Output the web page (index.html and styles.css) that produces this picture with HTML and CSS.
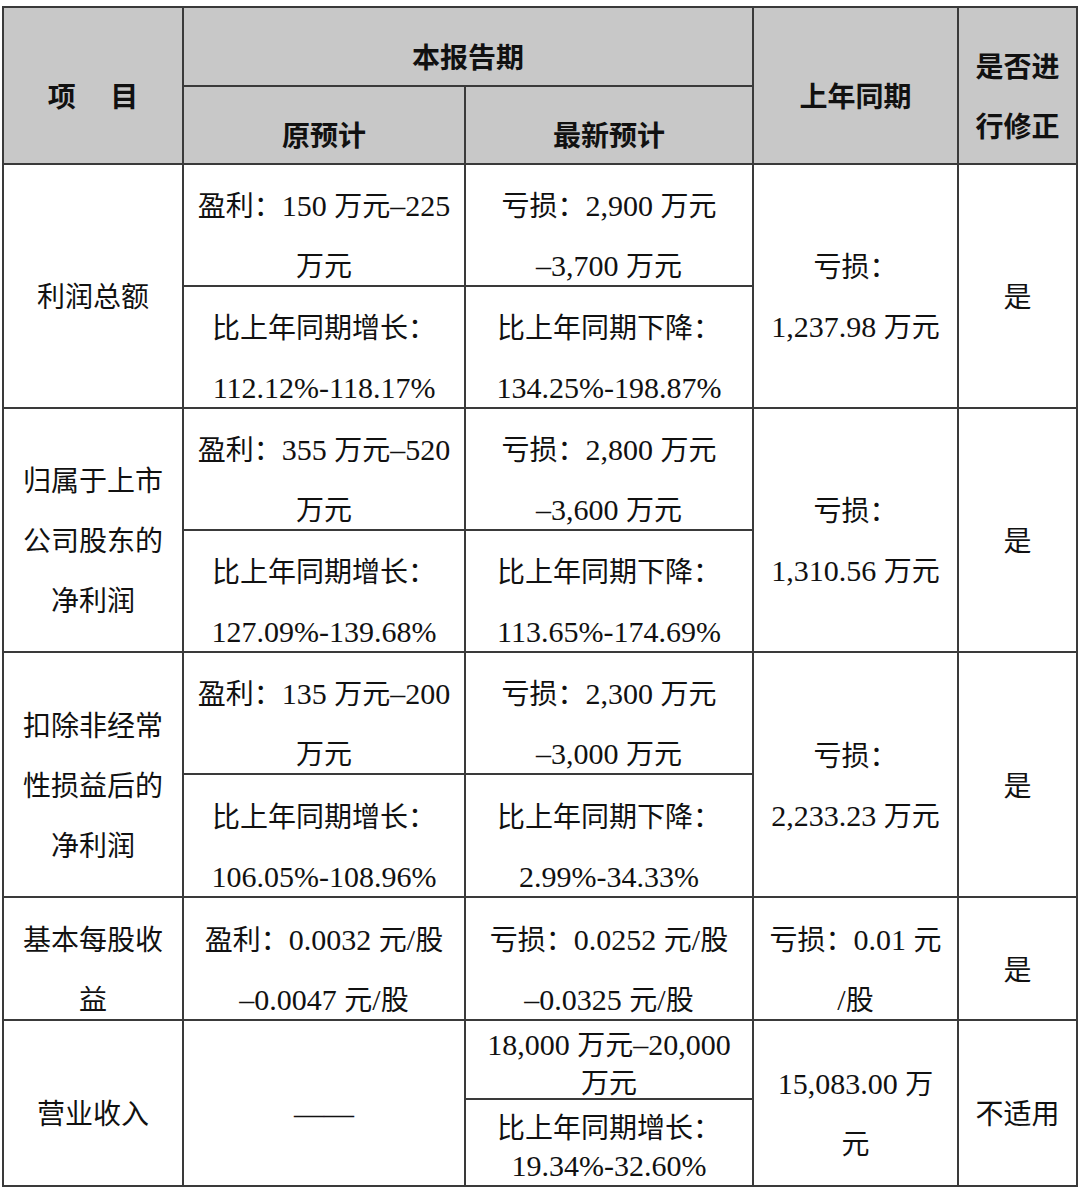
FILE: index.html
```html
<!DOCTYPE html>
<html lang="zh-CN">
<head>
<meta charset="utf-8">
<link rel="stylesheet" href="styles.css">
</head>
<body>
<table class="sheet">
  <colgroup>
    <col class="c1"><col class="c2"><col class="c3"><col class="c4"><col class="c5">
  </colgroup>
  <tr class="h1">
    <th rowspan="2"><div class="t">项　 目</div></th>
    <th colspan="2"><div class="t">本报告期</div></th>
    <th rowspan="2"><div class="t">上年同期</div></th>
    <th rowspan="2"><div class="t">是否进<br>行修正</div></th>
  </tr>
  <tr class="h2">
    <th><div class="t">原预计</div></th>
    <th><div class="t">最新预计</div></th>
  </tr>

  <tr class="r">
    <td rowspan="2"><div class="t">利润总额</div></td>
    <td><div class="t">盈利：<span class="n">150 </span>万元<span class="n">–225</span><br>万元</div></td>
    <td><div class="t">亏损：<span class="n">2,900 </span>万元<br><span class="n">–3,700 </span>万元</div></td>
    <td rowspan="2"><div class="t">亏损：<br><span class="n">1,237.98 </span>万元</div></td>
    <td rowspan="2"><div class="t">是</div></td>
  </tr>
  <tr class="r">
    <td><div class="t">比上年同期增长：<br><span class="n">112.12%-118.17%</span></div></td>
    <td><div class="t">比上年同期下降：<br><span class="n">134.25%-198.87%</span></div></td>
  </tr>

  <tr class="r">
    <td rowspan="2"><div class="t">归属于上市<br>公司股东的<br>净利润</div></td>
    <td><div class="t">盈利：<span class="n">355 </span>万元<span class="n">–520</span><br>万元</div></td>
    <td><div class="t">亏损：<span class="n">2,800 </span>万元<br><span class="n">–3,600 </span>万元</div></td>
    <td rowspan="2"><div class="t">亏损：<br><span class="n">1,310.56 </span>万元</div></td>
    <td rowspan="2"><div class="t">是</div></td>
  </tr>
  <tr class="r">
    <td><div class="t">比上年同期增长：<br><span class="n">127.09%-139.68%</span></div></td>
    <td><div class="t">比上年同期下降：<br><span class="n">113.65%-174.69%</span></div></td>
  </tr>

  <tr class="r">
    <td rowspan="2"><div class="t">扣除非经常<br>性损益后的<br>净利润</div></td>
    <td><div class="t">盈利：<span class="n">135 </span>万元<span class="n">–200</span><br>万元</div></td>
    <td><div class="t">亏损：<span class="n">2,300 </span>万元<br><span class="n">–3,000 </span>万元</div></td>
    <td rowspan="2"><div class="t">亏损：<br><span class="n">2,233.23 </span>万元</div></td>
    <td rowspan="2"><div class="t">是</div></td>
  </tr>
  <tr class="r r3b">
    <td><div class="t">比上年同期增长：<br><span class="n">106.05%-108.96%</span></div></td>
    <td><div class="t">比上年同期下降：<br><span class="n">2.99%-34.33%</span></div></td>
  </tr>

  <tr class="r r4">
    <td><div class="t">基本每股收<br>益</div></td>
    <td><div class="t">盈利：<span class="n">0.0032 </span>元<span class="n">/</span>股<br><span class="n">–0.0047 </span>元<span class="n">/</span>股</div></td>
    <td><div class="t">亏损：<span class="n">0.0252 </span>元<span class="n">/</span>股<br><span class="n">–0.0325 </span>元<span class="n">/</span>股</div></td>
    <td><div class="t">亏损：<span class="n">0.01 </span>元<br><span class="n">/</span>股</div></td>
    <td><div class="t">是</div></td>
  </tr>

  <tr class="s1">
    <td rowspan="2"><div class="t">营业收入</div></td>
    <td rowspan="2"><div class="t"><span class="n">——</span></div></td>
    <td><div class="t tight"><span class="n">18,000 </span>万元<span class="n">–20,000</span><br>万元</div></td>
    <td rowspan="2"><div class="t"><span class="n">15,083.00 </span>万<br>元</div></td>
    <td rowspan="2"><div class="t">不适用</div></td>
  </tr>
  <tr class="s2">
    <td><div class="t tight">比上年同期增长：<br><span class="n">19.34%-32.60%</span></div></td>
  </tr>
</table>
</body>
</html>
```

FILE: styles.css
```css
html, body {
  margin: 0;
  padding: 0;
  background: #ffffff;
}
body {
  padding: 6px 0 0 2px;
}
.sheet {
  border-collapse: collapse;
  table-layout: fixed;
  width: 1076px;
  font-family: "Noto Sans CJK SC", "Liberation Serif", serif;
  font-size: 28px;
  color: #111111;
}
.c1 { width: 180px; }
.c2 { width: 282px; }
.c3 { width: 288px; }
.c4 { width: 205px; }
.c5 { width: 119px; }

.sheet th,
.sheet td {
  border: 2px solid #3a3a3a;
  text-align: center;
  vertical-align: middle;
  padding: 0;
  white-space: nowrap;
  line-height: 60px;
}
.sheet th {
  background: #c8c8c8;
  font-weight: 700;
}
.t {
  margin: 9px 0 -9px 0;
}
.t.tight {
  line-height: 38px;
  margin: 2px 0 -2px 0;
}
.n {
  font-family: "Liberation Serif", serif;
  font-size: 30px;
  line-height: 20px;
}
.h1 { height: 79px; }
.h2 { height: 78px; }
.r { height: 122px; }
.r.r3b { height: 123px; }
.r.r4 { height: 123px; }
.s1 { height: 79px; }
.s2 { height: 87px; }
```
